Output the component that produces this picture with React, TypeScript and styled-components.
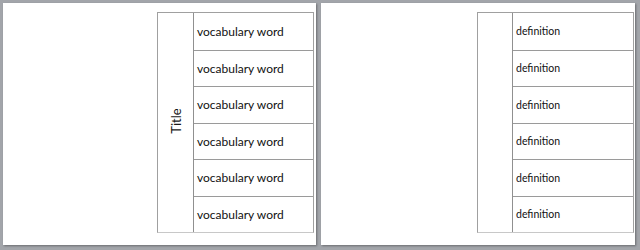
import styled, { createGlobalStyle } from 'styled-components';

const GlobalStyle = createGlobalStyle`
  html, body {
    margin: 0;
    padding: 0;
    background: #a2a5aa;
  }
`

const Spread = styled.div`
  display: flex;
  gap: 5px;
  width: 640px;
  height: 250px;
  padding: 3px 4px 5px 3px;
  box-sizing: border-box;
  font-family: Lato, "Open Sans", sans-serif;
`

const Page = styled.div<{ $width: number; $right: number }>`
  width: ${({ $width }) => $width}px;
  height: 242px;
  background: #fff;
  box-shadow: 1px 1px 2px rgba(0, 0, 0, 0.35);
  display: flex;
  justify-content: flex-end;
  align-items: flex-start;
  padding: 9px ${({ $right }) => $right}px 0 0;
  box-sizing: border-box;
`

const Table = styled.div<{ $titleWidth: number; $cellWidth: number }>`
  display: grid;
  grid-template-columns: ${({ $titleWidth, $cellWidth }) => `${$titleWidth}px ${$cellWidth}px`};
  grid-template-rows: repeat(6, 1fr);
  height: 221px;
  border: 1px solid #a0a0a0;
  border-bottom-color: #c8c8c8;
  box-sizing: border-box;
`

const TitleCell = styled.div`
  grid-row: 1 / span 6;
  border-right: 1px solid #909090;
  display: flex;
  align-items: center;
  justify-content: center;
`

const TitleText = styled.span`
  transform: rotate(-90deg);
  font-size: 13px;
  color: #1a1a1a;
  white-space: nowrap;
  margin-top: -3px;
`

const Cell = styled.div<{ $size: number }>`
  display: flex;
  align-items: center;
  padding-left: 3px;
  font-size: ${({ $size }) => $size}px;
  color: #111;
  white-space: nowrap;

  & + & {
    border-top: 1px solid #9a9a9a;
  }
`

const rows = [0, 1, 2, 3, 4, 5]

export default function App() {
  return (
    <>
      <GlobalStyle />
      <Spread>
        <Page $width={313} $right={2}>
          <Table $titleWidth={36} $cellWidth={119}>
            <TitleCell>
              <TitleText>Title</TitleText>
            </TitleCell>
            {rows.map((i) => (
              <Cell key={i} $size={12}>vocabulary word</Cell>
            ))}
          </Table>
        </Page>
        <Page $width={314} $right={1}>
          <Table $titleWidth={35} $cellWidth={120}>
            <TitleCell />
            {rows.map((i) => (
              <Cell key={i} $size={10.5}>definition</Cell>
            ))}
          </Table>
        </Page>
      </Spread>
    </>
  )
}
